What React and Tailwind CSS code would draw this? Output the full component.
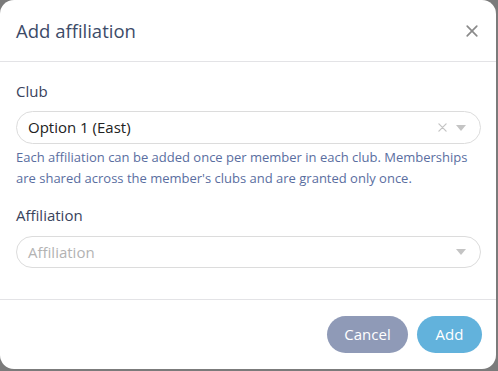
function Caret() {
  return (
    <svg width="10" height="6" viewBox="0 0 10 6" className="fill-[#c4c4c4]">
      <path d="M0 0h10L5 6z" />
    </svg>
  );
}

function Cross({ size = 10, className = "" }) {
  return (
    <svg width={size} height={size} viewBox="0 0 10 10" className={className}>
      <path d="M1 1l8 8M9 1l-8 8" strokeWidth="1.4" strokeLinecap="round" />
    </svg>
  );
}

export default function App() {
  return (
    <div className="h-[371px] w-[498px] bg-[#7b7b7b] font-['Open_Sans',sans-serif]">
      <div className="flex h-[369px] w-[496px] flex-col rounded-[14px] bg-white">
        {/* header */}
        <div className="flex h-[62px] items-center justify-between border-b border-[#e3e3e6] pl-4 pr-[18px]">
          <h2 className="text-[18.5px] text-[#3d4b68]">Add affiliation</h2>
          <button>
            <Cross size={12} className="stroke-[#8a8a8a]" />
          </button>
        </div>

        {/* body */}
        <div className="flex-1 px-4 pt-[19px]">
          <label className="block text-[15px] leading-[20px] text-[#39435c]">Club</label>
          <div className="mt-[10px] flex h-[33px] w-[465px] items-center rounded-full border border-[#dcdcdc] pl-[11px] pr-[14px]">
            <span className="flex-1 text-[15px] text-[#222]">Option 1 (East)</span>
            <Cross size={9} className="stroke-[#c4c4c4]" />
            <span className="ml-[9px]">
              <Caret />
            </span>
          </div>
          <p className="mt-[3px] w-[462px] text-[13px] leading-[21px] text-[#5a6e9f]">
            Each affiliation can be added once per member in each club. Memberships are shared across the member's clubs and are granted only once.
          </p>

          <label className="mt-[16px] block text-[15px] leading-[20px] text-[#39435c]">Affiliation</label>
          <div className="mt-[11px] flex h-[32px] w-[465px] items-center rounded-full border border-[#dcdcdc] pl-[11px] pr-[14px]">
            <span className="flex-1 text-[15px] text-[#b3b3b3]">Affiliation</span>
            <Caret />
          </div>
        </div>

        {/* footer */}
        <div className="flex h-[70px] items-start justify-end gap-[9px] border-t border-[#e3e3e6] pr-[14px] pt-[16px]">
          <button className="h-[37px] w-[81px] rounded-full bg-[#8f9ab7] text-[15px] text-white">Cancel</button>
          <button className="h-[37px] w-[65px] rounded-full bg-[#62b2dc] text-[15px] text-white">Add</button>
        </div>
      </div>
    </div>
  );
}
